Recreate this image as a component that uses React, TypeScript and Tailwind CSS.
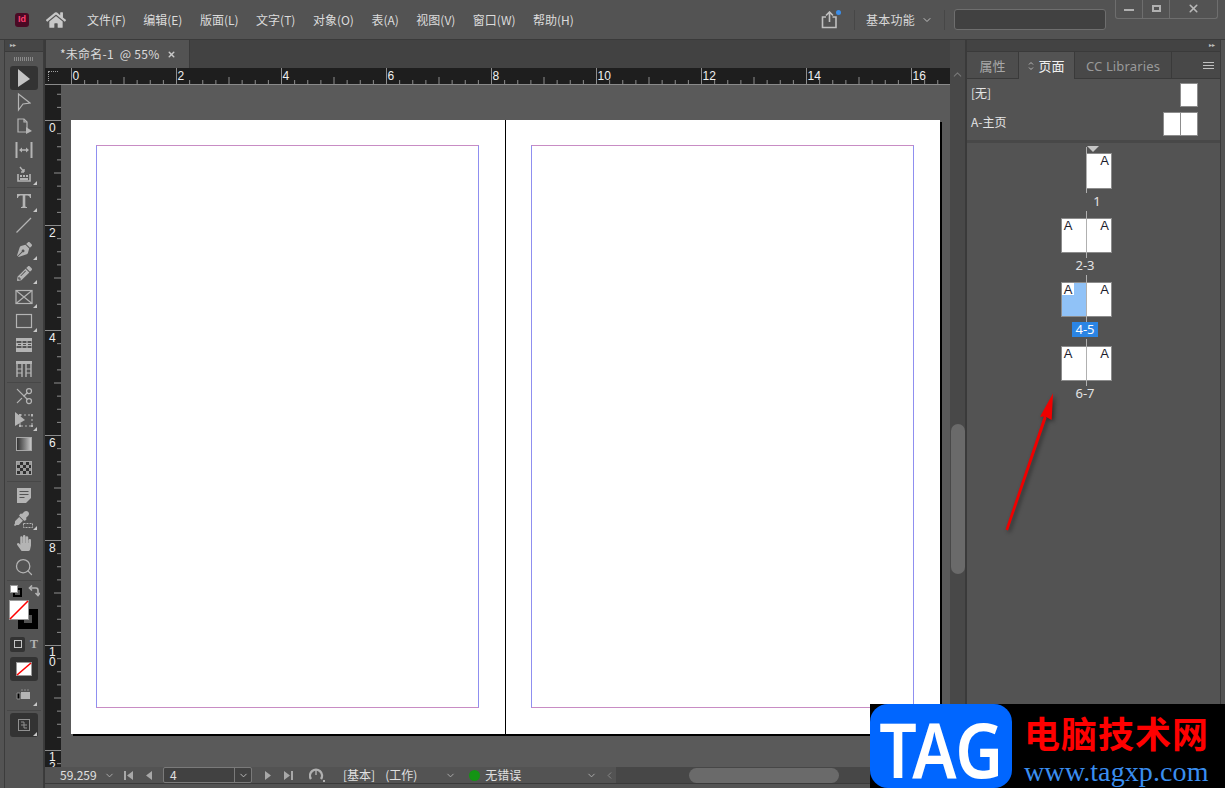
import { FaEyeDropper, FaHandPaper, FaHome, FaPenNib, FaPencilAlt } from "react-icons/fa"
import { ChevronDown, ChevronLeft, ChevronUp, Scissors, Search, X } from "lucide-react"

const menus = ["文件(F)", "编辑(E)", "版面(L)", "文字(T)", "对象(O)", "表(A)", "视图(V)", "窗口(W)", "帮助(H)"]

const UNIT = 52.5

function HRuler() {
  const ticks = []
  for (let i = -2; i < 75; i++) {
    const x = 10.5 + (i * UNIT) / 4
    const h = i % 8 === 0 ? 16 : i % 4 === 0 ? 7 : 4
    ticks.push(<line key={i} x1={x} x2={x} y1={16 - h} y2={16} stroke="#8e8e8e" />)
  }
  return (
    <svg width="889" height="16" className="block bg-[#1e1e1e]">
      {ticks}
      {[0, 2, 4, 6, 8, 10, 12, 14, 16].map((n) => (
        <text key={n} x={11.5 + n * UNIT} y="12" fontSize="12" fill="#f0f0f0" fontFamily="Liberation Sans">
          {n}
        </text>
      ))}
    </svg>
  )
}

function VRuler() {
  const ticks = []
  for (let i = -2; i < 55; i++) {
    const y = 35.5 + (i * UNIT) / 4
    const w = i % 8 === 0 ? 16 : i % 4 === 0 ? 7 : 4
    ticks.push(<line key={i} y1={y} y2={y} x1={16 - w} x2={16} stroke="#8e8e8e" />)
  }
  return (
    <svg width="16" height="683" className="block bg-[#1e1e1e] shrink-0">
      {ticks}
      {[0, 2, 4, 6, 8].map((n) => (
        <text key={n} x="4" y={47 + n * UNIT} fontSize="12" fill="#f0f0f0" fontFamily="Liberation Sans">
          {n}
        </text>
      ))}
      <text x="4" y="571" fontSize="12" fill="#f0f0f0" fontFamily="Liberation Sans">1</text>
      <text x="4" y="581" fontSize="12" fill="#f0f0f0" fontFamily="Liberation Sans">0</text>
      <text x="4" y="676" fontSize="12" fill="#f0f0f0" fontFamily="Liberation Sans">1</text>
      <text x="4" y="686" fontSize="12" fill="#f0f0f0" fontFamily="Liberation Sans">2</text>
    </svg>
  )
}

function Tool({ children, corner, active }: { children: React.ReactNode; corner?: boolean; active?: boolean }) {
  return (
    <div className={`relative w-[28px] h-[24px] ml-[5px] flex items-center justify-center text-[#b4b4b4] rounded-[3px] ${active ? "bg-[#333333]" : ""}`}>
      {children}
      {corner && (
        <svg width="4" height="4" className="absolute right-[1px] bottom-[1px]">
          <path d="M4 0V4H0Z" fill="#c8c8c8" />
        </svg>
      )}
    </div>
  )
}

function Sep() {
  return <div className="h-px bg-[#474747] mx-[2px] my-[1px]" />
}

function Icon({ children }: { children: React.ReactNode }) {
  return (
    <svg width="18" height="18" viewBox="0 0 18 18" fill="none" stroke="#b4b4b4" strokeWidth="1.2">
      {children}
    </svg>
  )
}

function NoneSwatch({ w, h }: { w: number; h: number }) {
  return (
    <svg width={w} height={h} className="block">
      <rect x="0.5" y="0.5" width={w - 1} height={h - 1} fill="#fff" stroke="#999" />
      <line x1="1" y1={h - 1} x2={w - 1} y2="1" stroke="#f00" strokeWidth="1.6" />
    </svg>
  )
}

function Toolbar() {
  return (
    <div className="w-[45px] shrink-0 pl-[4px] border-r border-[#3a3a3a] flex">
      <div className="w-[40px] border-x border-[#3c3c3c] flex flex-col">
        <div className="h-[12px] bg-[#464646] border-b border-[#3a3a3a] text-[#c0c0c0] text-[6px] leading-[11px] pl-[5px] font-['Liberation_Sans',sans-serif]">▸▸</div>
        <div className="h-[14px] flex items-center justify-center">
          <div className="w-[20px] h-[4px] bg-[repeating-linear-gradient(90deg,#8a8a8a_0_1px,transparent_1px_2px)]" />
        </div>
        <Tool active>
          <svg width="14" height="20" viewBox="0 0 14 20"><path d="M1 1L13 11L1 19Z" fill="#c4c4c4" /></svg>
        </Tool>
        <Tool>
          <svg width="14" height="20" viewBox="0 0 14 20"><path d="M1.5 2L13 11L6 12L1.5 18Z" fill="none" stroke="#b4b4b4" strokeWidth="1.2" /></svg>
        </Tool>
        <Tool>
          <Icon>
            <path d="M3 2H9L12 5V15H3Z" />
            <path d="M9 2V5H12" />
            <path d="M11 10L17 14L11 17Z" fill="#b4b4b4" stroke="none" />
          </Icon>
        </Tool>
        <Tool>
          <Icon>
            <path d="M1.5 1V17M16.5 1V17" strokeWidth="2" />
            <path d="M5 9H13" strokeWidth="1.5" />
            <path d="M4 9L7 6.5V11.5ZM14 9L11 6.5V11.5Z" fill="#b4b4b4" stroke="none" />
          </Icon>
        </Tool>
        <Tool corner>
          <Icon>
            <path d="M3 9V16H15V9" strokeWidth="1.6" />
            <path d="M5 2L9 7M9 7V4M9 7H6" strokeWidth="1.4" />
            <path d="M5 10H7V12H5ZM8 10H10V12H8ZM11 10H13V12H11ZM5 13H13V15H5Z" fill="#b4b4b4" stroke="none" />
          </Icon>
        </Tool>
        <Sep />
        <Tool corner>
          <svg width="16" height="16" viewBox="0 0 16 16"><path d="M1 1H15V5H14C13.5 3 13 2.6 9.3 2.6V13C9.3 13.8 10 14 11 14V15H5V14C6 14 6.7 13.8 6.7 13V2.6C3 2.6 2.5 3 2 5H1Z" fill="#b4b4b4" /></svg>
        </Tool>
        <Tool>
          <Icon><path d="M1.5 16.5L16 2" /></Icon>
        </Tool>
        <Tool corner><FaPenNib size={15} /></Tool>
        <Tool corner><FaPencilAlt size={15} /></Tool>
        <Tool corner>
          <Icon>
            <rect x="1" y="2.5" width="16" height="13" />
            <path d="M1 2.5L17 15.5M17 2.5L1 15.5" />
          </Icon>
        </Tool>
        <Tool corner>
          <Icon><rect x="1.5" y="2.5" width="15" height="13" /></Icon>
        </Tool>
        <Tool>
          <svg width="16" height="14" viewBox="0 0 16 14"><path d="M0 0H16V3H0ZM0 5H16V8H0ZM0 10H16V14H0Z" fill="#b4b4b4" /><path d="M6 3V14M11 3V14M0 0V14M16 0V14" stroke="#b4b4b4" /><path d="M2 6H5V7H2ZM7 6H10V7H7ZM12 6H15V7H12Z" fill="#535353" /></svg>
        </Tool>
        <Tool>
          <svg width="16" height="16" viewBox="0 0 16 16"><path d="M0 0H16V3H0Z" fill="#b4b4b4" /><path d="M1 3V16M6 3V16M10 3V16M15 3V16" stroke="#b4b4b4" strokeWidth="1.4" /><path d="M1 8H6M10 8H15M1 12H6M10 12H15" stroke="#b4b4b4" /></svg>
        </Tool>
        <Sep />
        <Tool><Scissors size={20} strokeWidth={1.5} className="-scale-x-100" /></Tool>
        <Tool corner>
          <svg width="20" height="18" viewBox="0 0 20 18">
            <path d="M1 1L11 9L1 15Z" fill="#b4b4b4" />
            <rect x="6" y="4" width="12" height="11" fill="none" stroke="#b4b4b4" strokeDasharray="2 2" />
            <path d="M5 3H7V5H5ZM17 3H19V5H17ZM5 14H7V16H5ZM17 14H19V16H17Z" fill="#b4b4b4" />
          </svg>
        </Tool>
        <Tool>
          <div className="w-[16px] h-[14px] border border-[#a8a8a8] bg-gradient-to-r from-[#333333] to-[#c8c8c8]" />
        </Tool>
        <Tool>
          <div className="w-[16px] h-[14px] border border-[#a8a8a8] bg-[conic-gradient(#303030_25%,#9a9a9a_0_50%,#303030_0_75%,#9a9a9a_0)] bg-[length:6px_6px]" />
        </Tool>
        <Sep />
        <Tool>
          <svg width="16" height="15" viewBox="0 0 16 15"><path d="M1 0H15V10L10 15H1Z" fill="#b4b4b4" /><path d="M3.5 3.5H12.5M3.5 6.5H12.5M3.5 9.5H8.5" stroke="#535353" /></svg>
        </Tool>
        <Tool corner>
          <FaEyeDropper size={15} className="-translate-x-[3px] -translate-y-[1px]" />
          <svg width="10" height="5" className="absolute left-[13px] bottom-[3px]"><rect x="0.5" y="0.5" width="9" height="4" fill="none" stroke="#b4b4b4" strokeDasharray="2 1" /></svg>
        </Tool>
        <Tool><FaHandPaper size={16} /></Tool>
        <Tool>
          <Search size={20} strokeWidth={1.5} />
        </Tool>
        <Sep />
        {/* swap / default row */}
        <div className="h-[18px] flex items-center gap-[6px] pl-[5px]">
          <div className="relative w-[12px] h-[12px]">
            <div className="absolute right-0 bottom-0 w-[9px] h-[9px] border-2 border-black" />
            <div className="absolute left-0 top-0 w-[8px] h-[8px] bg-white border border-[#999999]">
            </div>
          </div>
          <svg width="12" height="12" viewBox="0 0 12 12" fill="none" stroke="#b4b4b4" strokeWidth="1.6"><path d="M2 3H8C9.5 3 10 4 10 5.5V10" /><path d="M4 0.5L1.5 3L4 5.5M7.5 8L10 10.5L12 8" /></svg>
        </div>
        <div className="relative h-[32px] ml-[4px]">
          <div className="absolute left-[9px] top-[9px] w-[20px] h-[20px] border-[6px] border-black bg-[#535353]" />
          <div className="absolute left-0 top-0"><NoneSwatch w={20} h={20} /></div>
        </div>
        <div className="h-[22px] mt-[1px] flex items-center gap-[2px] pl-[5px]">
          <div className="w-[15px] h-[15px] rounded-[2px] bg-[#333333] flex items-center justify-center">
            <div className="w-[8px] h-[8px] border border-[#c4c4c4]" />
          </div>
          <span className="w-[14px] text-center text-[12px] font-bold leading-none text-[#b4b4b4] font-['Liberation_Serif',serif]">T</span>
        </div>
        <div className="mt-[2px]">
          <Tool active><div className="relative"><NoneSwatch w={16} h={14} /></div></Tool>
        </div>
        <div className="h-[28px] flex items-center">
          <Tool corner>
            <svg width="16" height="12" viewBox="0 0 16 12"><rect x="5" y="3" width="9" height="7" fill="#b4b4b4" /><path d="M1 4V10H4V4ZM6 0V2M9 0V2M12 0V2" stroke="#8a8a8a" /></svg>
          </Tool>
        </div>
        <Sep />
        <div className="mt-[1px]">
          <Tool active corner>
            <svg width="12" height="12" viewBox="0 0 12 12" fill="none"><rect x="0.5" y="0.5" width="11" height="11" stroke="#909090" /><path d="M3 3H6V9M9 9H6M3 6H9" stroke="#909090" /></svg>
          </Tool>
        </div>
      </div>
    </div>
  )
}

function Spread({ label, selected }: { label: string; selected?: boolean }) {
  return (
    <div className="flex flex-col items-center w-[51px] h-[64px]">
      <div className="relative w-[51px] h-[35px] flex">
        <div className={`relative flex-1 border-y border-l border-[#8c8c8c] ${selected ? "bg-[#90c2f7]" : "bg-white"}`}>
          <span className={`absolute left-0 top-0 w-[12px] h-[12px] text-center text-[13px] leading-[13px] text-[#1c1c2c] font-['Liberation_Sans',sans-serif] ${selected ? "bg-white" : ""}`}>A</span>
        </div>
        <div className="relative flex-1 bg-white border-y border-r border-[#8c8c8c]">
          <span className="absolute right-[2px] top-0 text-[13px] leading-[13px] text-[#1c1c2c] font-['Liberation_Sans',sans-serif]">A</span>
        </div>
        <div className="absolute left-[25px] -top-[7px] -bottom-[5px] w-px bg-[#b0b0b0]" />
      </div>
      <div className={`mt-[5px] -ml-[3px] text-[13px] leading-[15px] text-[#e4e4e4] px-[3px] ${selected ? "bg-[#2b85e4] text-white" : ""}`}>{label}</div>
    </div>
  )
}

function RightPanel() {
  return (
    <div className="w-[255px] shrink-0 flex flex-col border-x border-[#3a3a3a] bg-[#535353]">
      <div className="h-[12px] bg-[#434343] border-b border-[#3a3a3a] text-[#c0c0c0] text-[6px] leading-[11px] text-right pr-[5px] font-['Liberation_Sans',sans-serif]">▸▸</div>
      <div className="h-[27px] flex bg-[#484848] border-b border-[#3a3a3a] text-[13px] relative">
        <div className="w-[52px] pt-[1px] bg-[#4d4d4d] border-r border-[#3a3a3a] flex items-center justify-center text-[#a8a8a8]">属性</div>
        <div className="w-[56px] h-[27px] bg-[#535353] border-r border-[#3a3a3a] flex items-center justify-center gap-[4px] text-[#f0f0f0]">
          <svg width="6" height="10" viewBox="0 0 6 10" fill="none" stroke="#b8b8b8"><path d="M1 3.5L3 1.5L5 3.5M1 6.5L3 8.5L5 6.5" /></svg>
          页面
        </div>
        <div className="w-[97px] pt-[4px] border-r border-[#3a3a3a] flex items-center justify-center text-[#9a9a9a] tracking-[0.15px] font-['Noto_Sans',sans-serif]">CC Libraries</div>
        <div className="flex-1 flex items-center justify-end pr-[6px]">
          <div className="w-[11px] h-[7px] border-y border-[#c0c0c0] relative after:absolute after:left-0 after:right-0 after:top-[2px] after:h-px after:bg-[#c0c0c0]" />
        </div>
      </div>
      <div className="h-[64px] shrink-0 px-[4px] pt-[3px] text-[12px] text-[#e4e4e4] flex flex-col border-b-[3px] border-[#484848]">
        <div className="h-[25px] flex items-center justify-between pr-[18px]">
          <span className="mb-[4px]">[无]</span>
          <div className="w-[18px] h-[24px] bg-white border border-[#8c8c8c]" />
        </div>
        <div className="h-[25px] mt-[4px] flex items-center justify-between pr-[18px]">
          <span className="mb-[4px]">A-主页</span>
          <div className="flex w-[35px] h-[24px] bg-white border border-[#8c8c8c]">
            <div className="w-[17px] border-r border-[#8c8c8c]" />
          </div>
        </div>
      </div>
      <div className="flex-1 pl-[94px] pt-[10px] flex flex-col font-['Noto_Sans','Noto_Sans_CJK_SC',sans-serif]">
        <div className="flex flex-col items-center w-[51px] h-[65px]">
          <div className="relative w-[51px] h-[36px] flex justify-end">
            <div className="relative w-[26px] h-[36px] bg-white border border-[#8c8c8c] text-[#1c1c2c] text-[13px] leading-[13px] font-['Liberation_Sans',sans-serif]">
              <span className="absolute right-[2px] top-0">A</span>
            </div>
            <div className="absolute left-[25px] -top-[6px] -bottom-[4px] w-px bg-[#b0b0b0]" />
            <svg width="12" height="6" className="absolute left-[26px] -top-[7px]"><path d="M0 0H12L6 6Z" fill="#c4c4c4" /></svg>
          </div>
          <div className="mt-[5px] ml-[21px] text-[13px] leading-[15px] text-[#e4e4e4]">1</div>
        </div>
        <Spread label="2-3" />
        <Spread label="4-5" selected />
        <Spread label="6-7" />
      </div>
    </div>
  )
}

function StatusBar() {
  return (
    <div className="h-[16px] flex items-center bg-[#535353] text-[12px] text-[#e0e0e0] shrink-0">
      <span className="ml-[15px] w-[44px] whitespace-nowrap">59.259</span>
      <ChevronDown size={11} className="text-[#b0b0b0]" />
      <svg width="10" height="9" className="ml-[9px]" viewBox="0 0 10 9"><path d="M0 0H2V9H0ZM9 0V9L3 4.5Z" fill="#a8a8a8" /></svg>
      <svg width="6" height="9" className="ml-[12px]" viewBox="0 0 6 9"><path d="M6 0V9L0 4.5Z" fill="#a8a8a8" /></svg>
      <div className="ml-[11px] w-[89px] h-[16px] flex rounded-[2px] border border-[#7a7a7a] bg-[#414141] leading-[14px]">
        <span className="w-[71px] pl-[6px] border-r border-[#7a7a7a]">4</span>
        <span className="flex-1 flex items-center justify-center"><ChevronDown size={11} className="text-[#c0c0c0]" /></span>
      </div>
      <svg width="6" height="9" className="ml-[13px]" viewBox="0 0 6 9"><path d="M0 0V9L6 4.5Z" fill="#a8a8a8" /></svg>
      <svg width="10" height="9" className="ml-[12px]" viewBox="0 0 10 9"><path d="M8 0H10V9H8ZM1 0V9L7 4.5Z" fill="#a8a8a8" /></svg>
      <svg width="16" height="14" className="ml-[16px]" viewBox="0 0 16 14" fill="none"><path d="M2 11A6 6 0 1 1 12 11" stroke="#b0b0b0" strokeWidth="2.4" /><path d="M7 2V7" stroke="#b0b0b0" strokeWidth="1.4" /><rect x="14" y="12" width="2" height="2" fill="#b0b0b0" /></svg>
      <span className="ml-[18px]">[基本]</span>
      <span className="ml-[10px]">(工作)</span>
      <ChevronDown size={11} className="ml-[28px] text-[#b0b0b0]" />
      <div className="ml-[13px] w-[11px] h-[11px] rounded-full bg-[#149414]" />
      <span className="ml-[5px]">无错误</span>
      <ChevronDown size={11} className="ml-[65px] text-[#b0b0b0]" />
      <div className="ml-[5px] flex-1 h-[16px] bg-[#474747] flex items-center">
        <div className="w-[14px] h-[16px] bg-[#535353] flex items-center justify-center">
          <ChevronLeft size={11} className="text-[#8a8a8a]" />
        </div>
        <div className="ml-[73px] w-[150px] h-[15px] rounded-full bg-[#6a6a6a]" />
      </div>
    </div>
  )
}

export default function App() {
  return (
    <div className="relative w-[1225px] h-[788px] overflow-hidden bg-[#535353] flex flex-col font-['Noto_Sans_CJK_SC','Noto_Sans',sans-serif]">
      {/* title bar */}
      <header className="h-[40px] shrink-0 flex items-center bg-[#535353] border-b border-[#3a3a3a] text-[12px] text-[#dcdcdc]">
        <div className="ml-[15px] w-[14px] h-[14px] rounded-[3px] bg-[#4a0a24] flex items-center justify-center text-[9px] font-bold text-[#ff4070] font-['Liberation_Sans',sans-serif]">Id</div>
        <FaHome size={20} className="ml-[17px] text-[#c8c8c8]" />
        <nav className="ml-[21px] flex gap-[17.5px]">
          {menus.map((m) => (
            <span key={m}>{m}</span>
          ))}
        </nav>
        <div className="ml-auto relative flex items-center">
          <svg width="18" height="18" viewBox="0 0 18 18" fill="none" stroke="#c0c0c0" strokeWidth="1.6" className="mr-[15px]">
            <path d="M5 6H1.5V16.5H15V6H11.5" />
            <path d="M8.5 11V1.5M5 4.5L8.5 1L12 4.5" />
          </svg>
          <div className="absolute left-[15px] top-[1px] w-[5px] h-[5px] rounded-full bg-[#3b8eea]" />
          <div className="w-px h-[20px] bg-[#474747] mr-[11px]" />
          <span className="text-[#d8d8d8] tracking-[0.25px]">基本功能</span>
          <ChevronDown size={12} className="ml-[6px] text-[#c0c0c0]" />
          <div className="w-px h-[20px] bg-[#474747] ml-[11px] mr-[9px]" />
          <div className="w-[152px] h-[21px] rounded-[3px] bg-[#414141] border border-[#6e6e6e]" />
          <div className="ml-[9px] -mt-[21px] w-[103px] h-[20px] flex border border-t-0 border-[#6e6e6e] rounded-b-[3px] mr-[7px] text-[#b8b8b8]">
            <div className="flex-1 flex items-center justify-center border-r border-[#6e6e6e]"><div className="w-[10px] h-[2px] bg-[#b0b0b0] mt-[3px]" /></div>
            <div className="w-[27px] flex items-center justify-center border-r border-[#6e6e6e]"><div className="w-[9px] h-[7px] border-2 border-[#b0b0b0]" /></div>
            <div className="w-[47px] flex items-center justify-center"><X size={13} strokeWidth={3} /></div>
          </div>
        </div>
      </header>

      <div className="flex-1 flex min-h-0">
        <Toolbar />
        <main className="w-[905px] shrink-0 flex flex-col min-h-0">
          <div className="h-[28px] shrink-0 bg-[#424242] flex">
            <div className="w-[145px] bg-[#535353] border-x border-[#3a3a3a] flex items-center pl-[14px] text-[12px] text-[#dcdcdc]">
              <span className="tracking-[0.25px] whitespace-nowrap">*未命名-1&nbsp; @ 55%</span>
              <X size={9} strokeWidth={4} className="ml-[8px] text-[#c8c8c8]" />
            </div>
          </div>
          <div className="h-[16px] flex shrink-0">
            <div className="w-[16px] h-[16px] bg-[#1e1e1e] flex items-center justify-center"><div className="w-[10px] h-[10px] border-t border-l border-dotted border-[#a0a0a0]" /></div>
            <HRuler />
          </div>
          <div className="flex-1 flex min-h-0 border-t border-[#8a8a8a]">
            <div className="h-[683px] overflow-hidden"><VRuler /></div>
            <div className="flex-1 flex flex-col min-w-0 bg-[#5a5a5a] pl-[10px] pt-[35px]">
              <div className="w-[869px] h-[614px] shrink-0 bg-white flex shadow-[2px_2px_0_#000]">
                <div className="w-[435px] pl-[25px] pt-[25px] border-r border-black">
                  <div className="w-[383px] h-[563px] border-x border-x-[#8f8ff0] border-y border-y-[#c88cc4]" />
                </div>
                <div className="pl-[25px] pt-[25px]">
                  <div className="w-[383px] h-[563px] border-x border-x-[#8f8ff0] border-y border-y-[#c88cc4]" />
                </div>
              </div>
            </div>
          </div>
          <StatusBar />
          <div className="h-[5px] shrink-0 bg-[#535353] border-t border-[#3a3a3a]" />
        </main>
        <div className="w-[16px] shrink-0 bg-[#484848] border-r border-[#3a3a3a] pt-[31px] flex flex-col items-center">
          <ChevronUp size={13} className="text-[#777777] -mt-[3px]" />
          <div className="mt-[343px] w-[14px] h-[150px] rounded-full bg-[#6a6a6a]" />
        </div>
        <RightPanel />
        <div className="w-[3px] bg-[#535353]" />
      </div>

      {/* red arrow */}
      <svg width="70" height="150" viewBox="0 0 70 150" className="absolute left-[995px] top-[385px] drop-shadow-[2px_2px_2px_rgba(0,0,0,0.45)]">
        <path d="M10.5 144.5L13 145.5L51.5 33L50.7 31.7L56.7 35L58 8.3L45 31.7L48.8 31.5Z" fill="#f00000" />
      </svg>

      {/* watermark */}
      <div className="absolute left-[870px] top-[704px] w-[355px] h-[84px] bg-black flex">
        <div className="w-[142px] h-[84px] rounded-[18px] bg-[#0066ff] text-white overflow-hidden flex items-center justify-center font-['Noto_Sans',sans-serif]">
          <span className="text-[60px] leading-[70px] font-semibold whitespace-nowrap translate-y-[3px] scale-x-[1.1] scale-y-[1.25]">TAG</span>
        </div>
        <div className="ml-[12px] flex flex-col">
          <span className="mt-[9px] text-[36px] leading-[38px] font-bold text-[#ff0000] tracking-[1px] whitespace-nowrap">电脑技术网</span>
          <span className="mt-[7px] text-[28px] leading-[28px] text-[#3a8ef0] tracking-[0.1px] font-['Liberation_Serif',serif] whitespace-nowrap">www.tagxp.com</span>
        </div>
      </div>
    </div>
  )
}
